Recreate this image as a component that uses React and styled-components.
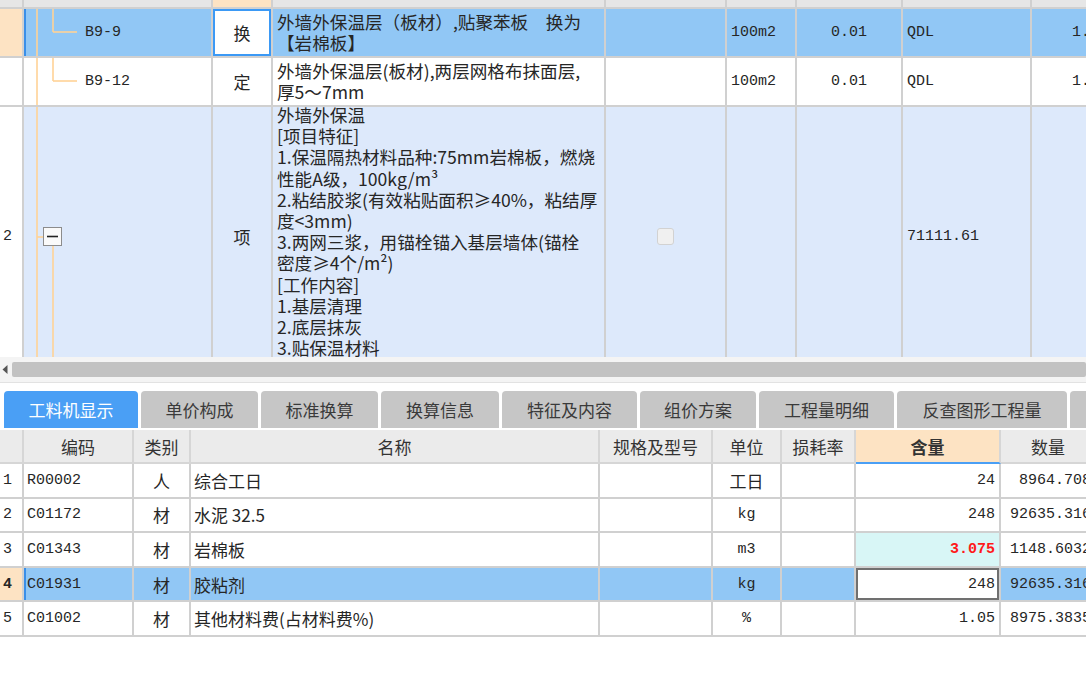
import React from 'react';
import styled, { createGlobalStyle, css } from 'styled-components';

const CJK = `"Noto Sans CJK SC", "Noto Sans", sans-serif`;
const MONO = `"Liberation Mono", "Noto Sans CJK SC", monospace`;

const LINE = '#d0d0d0';
const SEL = '#91c7f5';
const ORANGE = '#fde3c3';
const LIGHT = '#dde9fb';
const TREE = '#ffd296';

const Global = createGlobalStyle`
  html, body { margin: 0; padding: 0; background: #fff; overflow: hidden; }
  body { width: 1086px; height: 698px; font-family: ${CJK}; color: #222; }
  * { box-sizing: border-box; }
`;

const Page = styled.div`
  width: 1086px;
  height: 698px;
  overflow: hidden;
  display: flex;
  flex-direction: column;
`;

/* ---------- top grid ---------- */
const TopViewport = styled.div`
  flex: none;
  height: 357px;
  overflow: hidden;
`;

const TopTable = styled.div`
  display: grid;
  grid-template-columns: 24px 189px 60px 333px 121px 70px 106px 129px 64px;
  grid-template-rows: 9px 49px 49px 260px;
  width: max-content;
`;

const Cell = styled.div`
  position: relative;
  display: flex;
  align-items: center;
  justify-content: ${p => (p.$align === 'center' ? 'center' : p.$align === 'right' ? 'flex-end' : 'flex-start')};
  padding: 0 ${p => p.$pad ?? 4}px;
  border-right: 2px solid ${LINE};
  border-bottom: 2px solid ${LINE};
  background: ${p => p.$bg || '#fff'};
  font-family: ${p => (p.$mono ? MONO : CJK)};
  font-size: ${p => (p.$mono ? '15px' : '17px')};
  font-weight: ${p => (p.$bold ? 700 : 400)};
  color: ${p => p.$color || '#262626'};
  white-space: nowrap;
  overflow: hidden;
  ${p => p.$selLeft && css`box-shadow: inset 2px 0 0 #3a8fe8;`}
  ${p => p.$frame && css`box-shadow: inset 0 0 0 2px ${p.$frame};`}
`;

const HeadStub = styled.div`
  background: ${p => (p.$hot ? ORANGE : '#e6e6e6')};
  border-right: 2px solid ${LINE};
  border-bottom: 2px solid ${LINE};
`;

const TreeSvg = styled.svg`
  position: absolute;
  left: 0;
  top: 0;
  pointer-events: none;
`;

const Code = styled.span`
  position: relative;
  margin-left: 61px;
  font-family: ${MONO};
  font-size: 15px;
`;

const Desc = styled.div`
  font-family: ${CJK};
  font-size: 17.6px;
  line-height: ${p => (p.$tall ? '21.2px' : '20.5px')};
  margin-top: ${p => (p.$tall ? '-3px' : '0')};
  white-space: pre;
`;

const DescCell = styled(Cell)`
  align-items: ${p => (p.$top ? 'flex-start' : 'center')};
`;

const Check = styled.span`
  width: 17px;
  height: 17px;
  border-radius: 3px;
  background: #f0f0f0;
  border: 1px solid #d2d2d2;
`;

function Branch({ h, mid }) {
  return (
    <TreeSvg width="187" height={h}>
      <line x1="13" y1="0" x2="13" y2={h} stroke={TREE} strokeWidth="1.6" />
      <line x1="29" y1="0" x2="29" y2={mid} stroke={TREE} strokeWidth="1.6" />
      <line x1="29" y1={mid} x2="53" y2={mid} stroke={TREE} strokeWidth="1.6" />
    </TreeSvg>
  );
}

function Collapse({ h }) {
  return (
    <TreeSvg width="187" height={h}>
      <line x1="13" y1="0" x2="13" y2={h} stroke={TREE} strokeWidth="1.6" />
      <line x1="13" y1="130" x2="19" y2="130" stroke={TREE} strokeWidth="1.6" />
      <rect x="19.5" y="120.5" width="18" height="18" fill="#fafafa" stroke="#8c8c8c" />
      <line x1="23" y1="129.5" x2="34" y2="129.5" stroke="#222" strokeWidth="1.6" />
      <line x1="29" y1="139" x2="29" y2={h} stroke={TREE} strokeWidth="1.6" />
    </TreeSvg>
  );
}

/* ---------- scrollbar ---------- */
const ScrollBar = styled.div`
  flex: none;
  height: 26px;
  display: flex;
  align-items: center;
  gap: 3px;
  padding: 3px 0 4px 0;
  background: #f4f4f4;
  border-bottom: 1px solid #e2e2e2;
`;
const ArrowBtn = styled.div`
  width: 9px;
  height: 15px;
  display: flex;
  align-items: center;
  justify-content: center;
`;
const Thumb = styled.div`
  flex: 1;
  height: 15px;
  background: #c2c2c2;
  border-radius: 2px;
`;

/* ---------- tabs ---------- */
const TabStrip = styled.div`
  flex: none;
  margin-top: 8px;
  height: 37px;
  display: flex;
  gap: 3px;
  padding-left: 4px;
`;
const Tab = styled.div`
  flex: none;
  width: ${p => p.$w}px;
  height: 37px;
  display: flex;
  align-items: center;
  justify-content: center;
  border-radius: 4px 4px 0 0;
  background: ${p => (p.$active ? '#4a9ff5' : '#c6c6c6')};
  color: ${p => (p.$active ? '#fff' : '#3a3a3a')};
  font-family: ${CJK};
  font-size: 17px;
  white-space: nowrap;
`;

/* ---------- lower grid ---------- */
const LowTable = styled.div`
  flex: none;
  margin-top: 2px;
  display: grid;
  grid-template-columns: 24px 110px 57px 409px 113px 69px 74px 145px 96px;
  grid-template-rows: 34px repeat(5, 34.6px);
  width: max-content;
`;
const HeadCell = styled.div`
  display: flex;
  align-items: center;
  justify-content: center;
  background: ${p => (p.$hot ? ORANGE : '#ebebeb')};
  border-right: 2px solid #d6d6d6;
  border-bottom: 2px solid ${p => (p.$hot ? '#4a9ff5' : '#d6d6d6')};
  font-family: ${CJK};
  font-size: 17px;
  font-weight: ${p => (p.$hot ? 700 : 400)};
  color: #333;
  white-space: nowrap;
`;

const topRows = [
  {
    sel: true,
    code: 'B9-9',
    type: '换',
    desc: '外墙外保温层（板材）,贴聚苯板　换为\n【岩棉板】',
    unit: '100m2',
    qty: '0.01',
    expr: 'QDL',
  },
  {
    code: 'B9-12',
    type: '定',
    desc: '外墙外保温层(板材),两层网格布抹面层,\n厚5～7mm',
    unit: '100m2',
    qty: '0.01',
    expr: 'QDL',
  },
];

const bigDesc = [
  '外墙外保温',
  '[项目特征]',
  '1.保温隔热材料品种:75mm岩棉板，燃烧',
  '性能A级，100kg/m³',
  '2.粘结胶浆(有效粘贴面积≥40%，粘结厚',
  '度<3mm)',
  '3.两网三浆，用锚栓锚入基层墙体(锚栓',
  '密度≥4个/m²)',
  '[工作内容]',
  '1.基层清理',
  '2.底层抹灰',
  '3.贴保温材料',
].join('\n');

const tabs = [
  ['工料机显示', 134, true],
  ['单价构成', 117],
  ['标准换算', 117],
  ['换算信息', 118],
  ['特征及内容', 135],
  ['组价方案', 116],
  ['工程量明细', 135],
  ['反查图形工程量', 170],
  ['', 60],
];

const lowRows = [
  { n: '1', code: 'R00002', cat: '人', name: '综合工日', unit: '工日', amt: '24', qty: '8964.708' },
  { n: '2', code: 'C01172', cat: '材', name: '水泥 32.5', unit: 'kg', amt: '248', qty: '92635.316' },
  { n: '3', code: 'C01343', cat: '材', name: '岩棉板', unit: 'm3', amt: '3.075', qty: '1148.6032', edited: true },
  { n: '4', code: 'C01931', cat: '材', name: '胶粘剂', unit: 'kg', amt: '248', qty: '92635.316', sel: true },
  { n: '5', code: 'C01002', cat: '材', name: '其他材料费(占材料费%)', unit: '%', amt: '1.05', qty: '8975.3835' },
];

export default function App() {
  return (
    <Page>
      <Global />
      <TopViewport>
        <TopTable>
          {Array.from({ length: 9 }).map((_, i) => (
            <HeadStub key={i} $hot={i === 2} />
          ))}

          {topRows.map(r => {
            const bg = r.sel ? SEL : '#fff';
            return (
              <React.Fragment key={r.code}>
                <Cell $bg={r.sel ? ORANGE : '#fff'} />
                <Cell $bg={bg} $selLeft={r.sel} $pad={0}>
                  <Branch h={47} mid={23} />
                  <Code>{r.code}</Code>
                </Cell>
                <Cell $align="center" $bg="#fff" $frame={r.sel ? '#3b99f5' : undefined}>
                  {r.type}
                </Cell>
                <DescCell $bg={bg}>
                  <Desc>{r.desc}</Desc>
                </DescCell>
                <Cell $bg={bg} />
                <Cell $bg={bg} $mono>{r.unit}</Cell>
                <Cell $bg={bg} $mono $align="center">{r.qty}</Cell>
                <Cell $bg={bg} $mono>{r.expr}</Cell>
                <Cell $bg={bg} $mono $align="right">1.</Cell>
              </React.Fragment>
            );
          })}

          <Cell $mono $pad={3}>2</Cell>
          <Cell $bg={LIGHT} $pad={0}>
            <Collapse h={258} />
          </Cell>
          <Cell $bg={LIGHT} $align="center">项</Cell>
          <DescCell $bg={LIGHT} $top>
            <Desc $tall>{bigDesc}</Desc>
          </DescCell>
          <Cell $bg={LIGHT} $align="center">
            <Check />
          </Cell>
          <Cell $bg={LIGHT} />
          <Cell $bg={LIGHT} />
          <Cell $bg={LIGHT} $mono>71111.61</Cell>
          <Cell $bg={LIGHT} />
        </TopTable>
      </TopViewport>

      <ScrollBar>
        <ArrowBtn>
          <svg width="6" height="9" viewBox="0 0 6 9">
            <path d="M5.5 0 L0.5 4.5 L5.5 9 Z" fill="#555" />
          </svg>
        </ArrowBtn>
        <Thumb />
      </ScrollBar>

      <TabStrip>
        {tabs.map(([t, w, a], i) => (
          <Tab key={i} $w={w} $active={a}>
            {t}
          </Tab>
        ))}
      </TabStrip>

      <LowTable>
        <HeadCell />
        <HeadCell>编码</HeadCell>
        <HeadCell>类别</HeadCell>
        <HeadCell>名称</HeadCell>
        <HeadCell>规格及型号</HeadCell>
        <HeadCell>单位</HeadCell>
        <HeadCell>损耗率</HeadCell>
        <HeadCell $hot>含量</HeadCell>
        <HeadCell>数量</HeadCell>

        {lowRows.map(r => {
          const bg = r.sel ? SEL : '#fff';
          return (
            <React.Fragment key={r.n}>
              <Cell $mono $pad={3} $bg={r.sel ? ORANGE : '#fff'} $bold={r.sel}>
                {r.n}
              </Cell>
              <Cell $mono $pad={3} $bg={bg} $selLeft={r.sel}>{r.code}</Cell>
              <Cell $align="center" $bg={bg}>{r.cat}</Cell>
              <Cell $bg={bg} $pad={3}>{r.name}</Cell>
              <Cell $bg={bg} />
              <Cell $align="center" $bg={bg} $mono={r.unit !== '工日'}>{r.unit}</Cell>
              <Cell $bg={bg} />
              <Cell
                $mono
                $align="right"
                $bg={r.edited ? '#d8f6f6' : '#fff'}
                $color={r.edited ? '#ff1a1a' : '#262626'}
                $bold={r.edited}
                $frame={r.sel ? '#707070' : undefined}
              >
                {r.amt}
              </Cell>
              <Cell $mono $align="right" $bg={bg}>{r.qty}</Cell>
            </React.Fragment>
          );
        })}
      </LowTable>
    </Page>
  );
}
